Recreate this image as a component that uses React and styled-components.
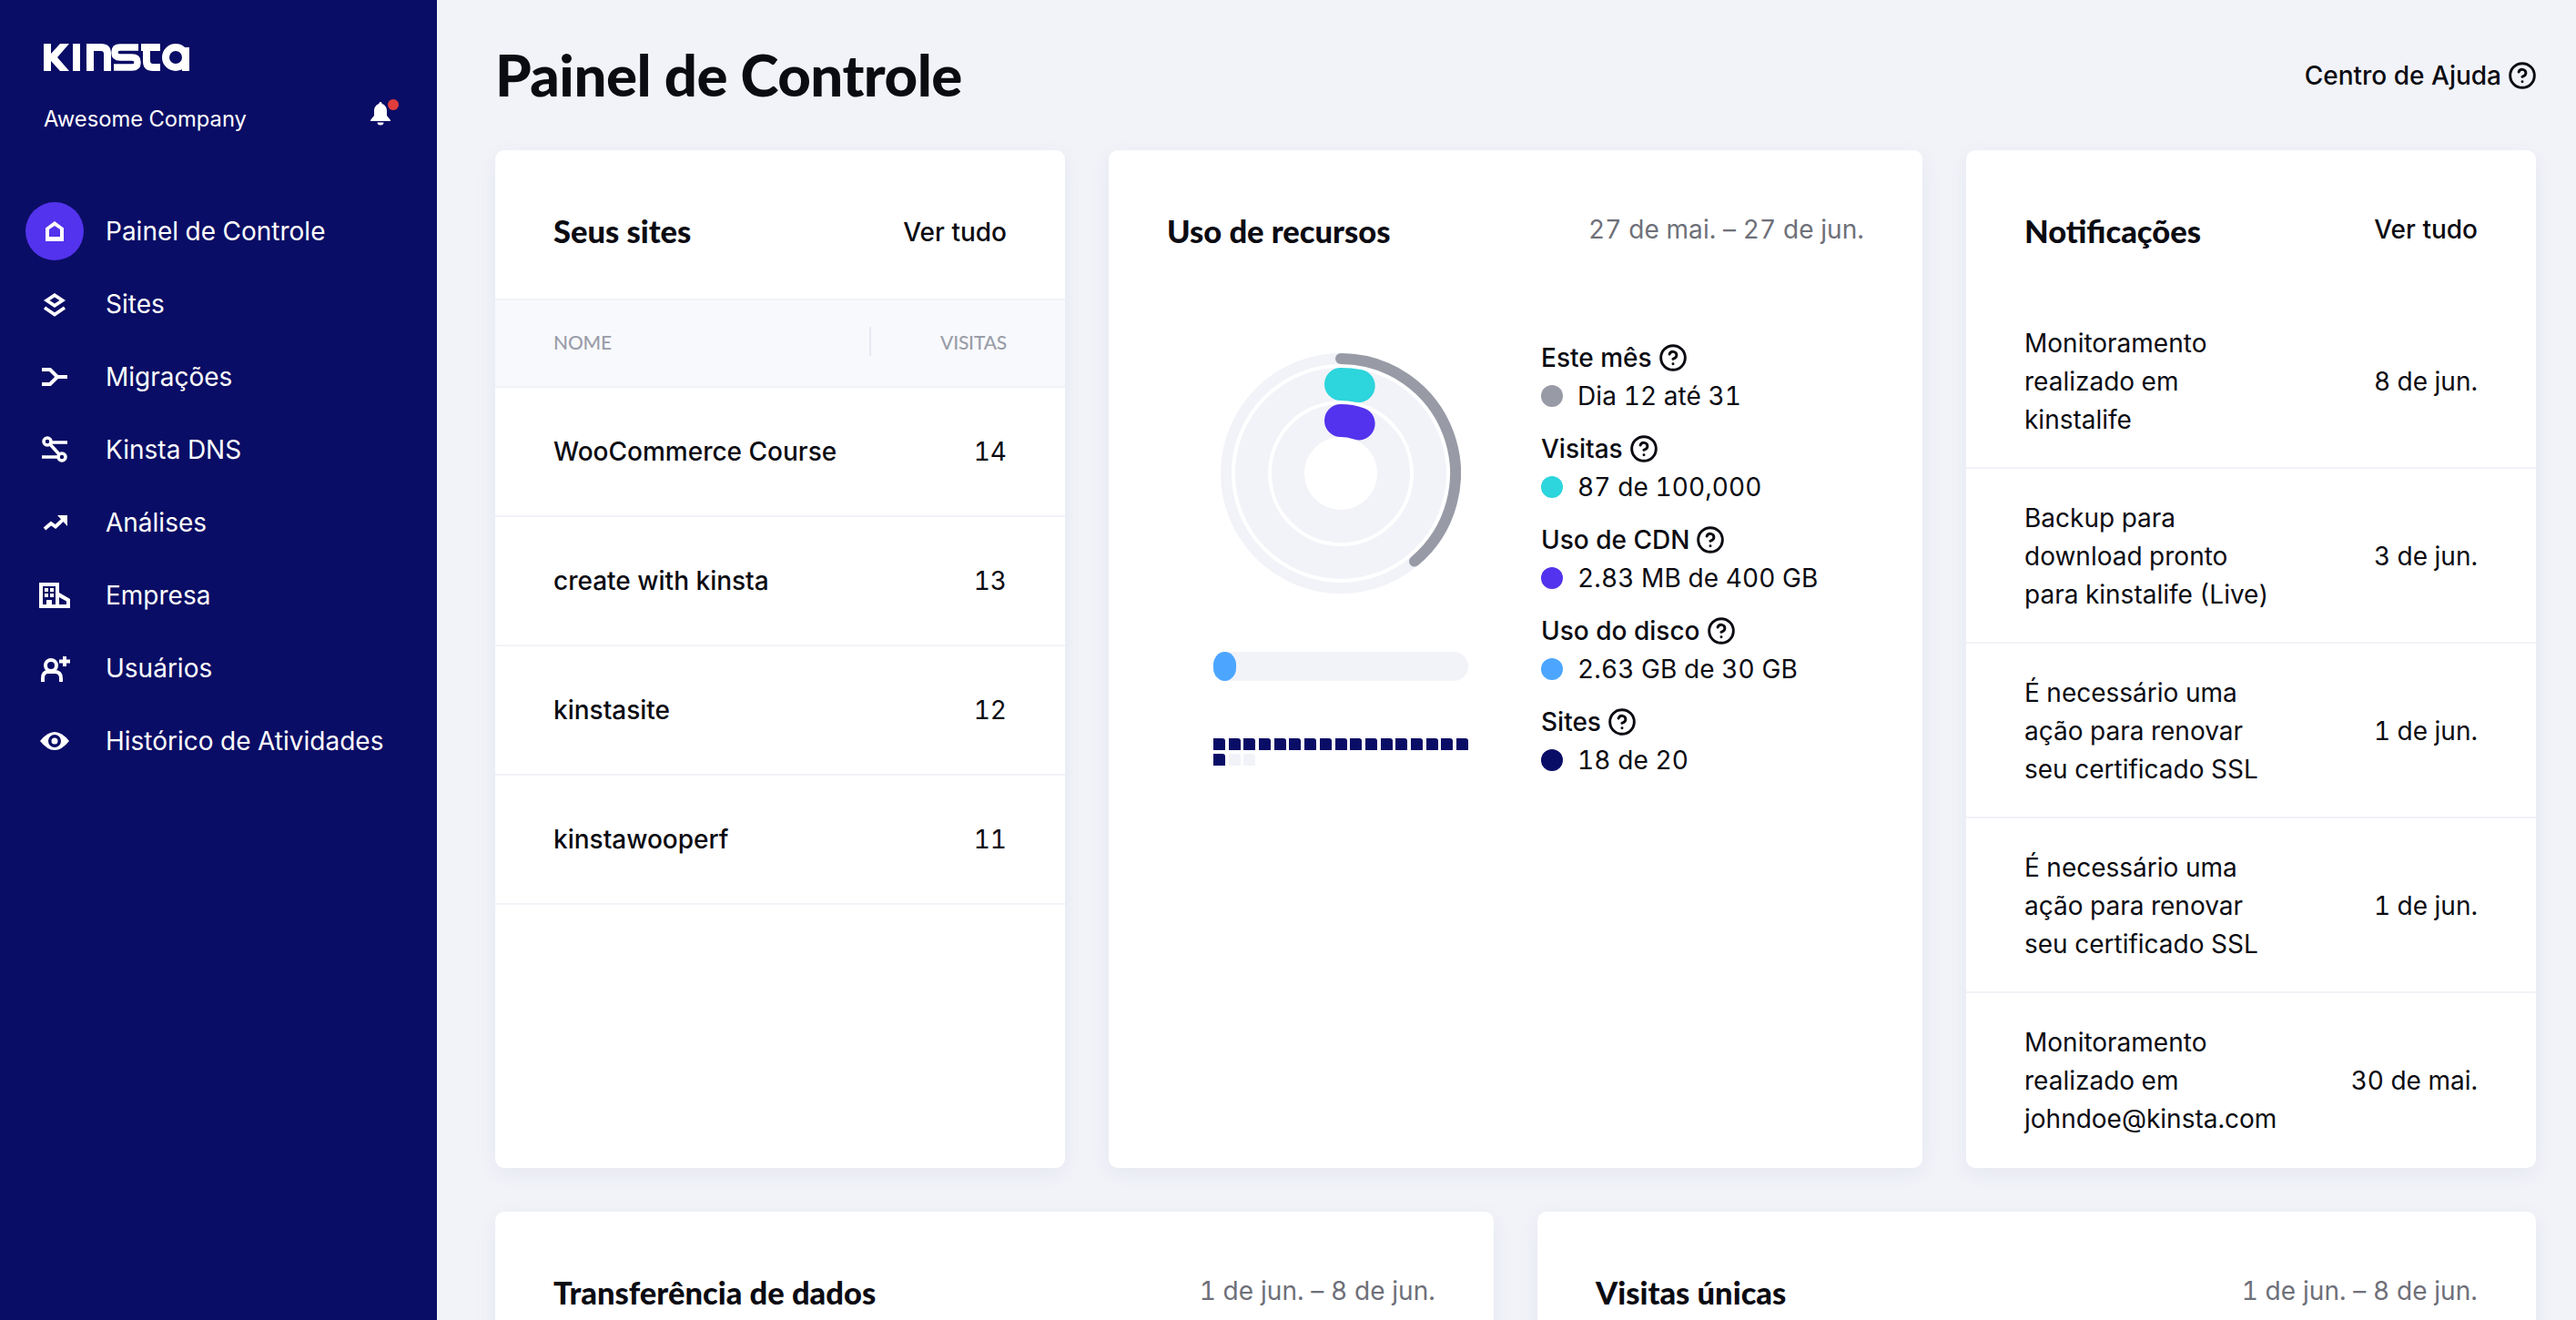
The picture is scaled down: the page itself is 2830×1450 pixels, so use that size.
import styled, { createGlobalStyle } from "styled-components";
import { CircleHelp } from "lucide-react";

const GlobalStyle = createGlobalStyle`
  * {
    box-sizing: border-box;
  }
  html,
  body {
    margin: 0;
    height: 100%;
    overflow: hidden;
    font-family: "Inter", "Liberation Sans", sans-serif;
    font-variant-numeric: tabular-nums;
    color: #0b0b12;
    -webkit-font-smoothing: antialiased;
  }
`;

const Layout = styled.div`
  display: flex;
  height: 100vh;
  background-color: #f2f3f8;
`;

const Sidebar = styled.aside`
  flex: 0 0 480px;
  display: flex;
  flex-direction: column;
  background-color: #0a0d65;
  color: #fff;
  padding-top: 48px;
`;

const Logo = styled.svg`
  display: block;
  margin-left: 48px;
`;

const CompanyRow = styled.div`
  display: flex;
  align-items: center;
  justify-content: space-between;
  margin: 34px 46px 0 48px;
  height: 36px;
  font-size: 23.75px;
`;

const BellWrap = styled.div`
  position: relative;
  display: flex;
  margin: 0 4px 10px 0;
`;

const BellDot = styled.span`
  position: absolute;
  top: -3px;
  right: -8px;
  width: 12px;
  height: 12px;
  border-radius: 50%;
  background-color: #e03c3c;
`;

const NavList = styled.nav`
  display: flex;
  flex-direction: column;
  margin-top: 66px;
`;

const NavItem = styled.a`
  display: flex;
  align-items: center;
  height: 80px;
  font-size: 28px;
`;

const NavIcon = styled.span`
  flex: 0 0 64px;
  height: 64px;
  margin: 0 24px 0 28px;
  display: flex;
  align-items: center;
  justify-content: center;
  border-radius: 50%;
  background-color: ${(props) => (props.$active ? "#5333ed" : "transparent")};
`;

const Main = styled.main`
  flex: 1;
  min-width: 0;
  height: 100vh;
  overflow: hidden;
  padding: 0 44px 0 64px;
`;

const TopBar = styled.header`
  display: flex;
  align-items: center;
  justify-content: space-between;
  height: 165px;
`;

const PageTitle = styled.h1`
  margin: -2px 0 0;
  font-family: "Lato", sans-serif;
  font-size: 63.5px;
  font-weight: 900;
  letter-spacing: -0.5px;
`;

const HelpLink = styled.a`
  display: flex;
  align-items: center;
  gap: 8px;
  font-size: 28px;
  font-weight: 500;
`;

const HelpIcon = styled(CircleHelp)`
  flex: none;
  margin: -1px;
`;

const TopRow = styled.section`
  display: grid;
  grid-template-columns: 626px 894px 626px;
  grid-template-rows: 1118px;
  gap: 48px;
`;

const BottomRow = styled.section`
  display: grid;
  grid-template-columns: 1097px 1097px;
  grid-template-rows: 626px;
  gap: 48px;
  margin-top: 48px;
`;

const Card = styled.article`
  display: flex;
  flex-direction: column;
  background-color: #fff;
  border-radius: 10px;
  box-shadow: 0 6px 20px rgba(170, 176, 216, 0.16);
  overflow: hidden;
`;

const CardHeader = styled.div`
  flex: 0 0 ${(props) => props.$height || 163}px;
  display: flex;
  align-items: flex-start;
  justify-content: space-between;
  padding: 71px 64px 0;
`;

const CardTitle = styled.h2`
  margin: 0;
  font-family: "Lato", sans-serif;
  font-size: 34.5px;
  line-height: 36px;
  font-weight: 900;
`;

const ViewAll = styled.a`
  margin-top: ${(props) => props.$drop || 0}px;
  font-size: 28px;
  line-height: 32px;
  font-weight: 500;
`;

const DateRange = styled.span`
  font-size: 28px;
  line-height: 32px;
  letter-spacing: 0.1px;
  color: #6e7079;
`;

const TableHead = styled.div`
  display: flex;
  align-items: center;
  justify-content: space-between;
  height: 98px;
  padding: 0 64px 4px;
  background-color: #f8f9fc;
  border-top: 2px solid #f2f3f8;
  border-bottom: 2px solid #f2f3f8;
  font-family: "Lato", sans-serif;
  font-size: 21px;
  font-weight: 500;
  letter-spacing: -0.2px;
  color: #9a9da9;
`;

const HeadRight = styled.span`
  display: flex;
  align-items: center;
  gap: 76px;
  &::before {
    content: "";
    width: 2px;
    height: 32px;
    background-color: #e8e9f1;
  }
`;

const SiteRow = styled.div`
  display: flex;
  align-items: center;
  justify-content: space-between;
  height: 142px;
  padding: 0 64px;
  border-bottom: 2px solid #f2f3f8;
  font-size: 28px;
  font-weight: 500;
`;

const SiteCount = styled.span`
  font-weight: 400;
`;

const UsageBody = styled.div`
  display: flex;
  gap: 80px;
  padding: 47px 0 0 115px;
`;

const ChartColumn = styled.div`
  width: 280px;
  margin-top: 13px;
  display: flex;
  flex-direction: column;
`;

const Donut = styled.svg`
  display: block;
  margin: 0 auto;
`;

const BarTrack = styled.div`
  height: 32px;
  margin-top: 64px;
  border-radius: 16px;
  background-color: #f2f3f8;
`;

const BarFill = styled.div`
  height: 100%;
  border-radius: 14px / 16px;
  background-color: #4ca6ff;
`;

const SquareGrid = styled.div`
  display: grid;
  grid-template-columns: repeat(17, 13px);
  justify-content: space-between;
  row-gap: 4px;
  margin-top: 63px;
`;

const Square = styled.span`
  height: 13px;
  border-top-right-radius: 3px;
  background-color: ${(props) => (props.$filled ? "#0a0d65" : "#f2f3f8")};
`;

const Legend = styled.div`
  display: flex;
  flex-direction: column;
  gap: 22px;
`;

const LegendTitle = styled.div`
  display: flex;
  align-items: center;
  gap: 8px;
  height: 36px;
  font-size: 28px;
  font-weight: 500;
`;

const LegendValue = styled.div`
  display: flex;
  align-items: center;
  gap: 16px;
  height: 36px;
  margin-top: 6px;
  font-size: 28px;
  letter-spacing: 0.1px;
`;

const Dot = styled.span`
  flex: 0 0 24px;
  height: 24px;
  border-radius: 50%;
  background-color: ${(props) => props.$color};
`;

const NoticeRow = styled.div`
  flex: 0 0 192px;
  display: flex;
  align-items: center;
  justify-content: space-between;
  padding: 2px 64px 0;
  border-bottom: 2px solid #f2f3f8;
  font-size: 28px;
  line-height: 42px;
  &:last-child {
    padding-top: 0;
    border-bottom: none;
  }
`;

const NoticeText = styled.div`
  width: 280px;
`;

const KinstaLogo = () => (
  <Logo width="160" height="30" viewBox="0 0 160 30" fill="#fff">
    <path d="M0 0h8v30H0zM8 11 18 0h10L15 15l13 15H18L8 19z" />
    <rect x="32" y="0" width="8" height="30" />
    <path d="M51 30V4h12q7 0 7 7v19" fill="none" stroke="#fff" strokeWidth="8" />
    <path d="M104 4H84q-6 0-6 5.5T84 15h13q6 0 6 5.5T97 26H77" fill="none" stroke="#fff" strokeWidth="7.5" />
    <path d="M113 0v19q0 7 7 7h8M107 4h21" fill="none" stroke="#fff" strokeWidth="8" />
    <circle cx="145" cy="15" r="11" fill="none" stroke="#fff" strokeWidth="8" />
    <rect x="152" y="4" width="8" height="26" />
  </Logo>
);

const BellIcon = () => (
  <svg width="24" height="26" viewBox="0 0 24 26" fill="#fff">
    <path d="M12 0c1 0 1.6.9 1.6 2C17 3 19 6 19 10v5l4 5v1H1v-1l4-5v-5c0-4 2-7 5.400-8C10.400.9 11 0 12 0z" />
    <path d="M8.500 22.500h7a3.500 3 0 0 1-7 0z" />
  </svg>
);

const icons = {
  home: (
    <svg width="24" height="24" viewBox="0 0 24 24" fill="#fff">
      <path fillRule="evenodd" d="M2 23V8.500L12 1l10 7.500V23zM6 18h12v-8l-6-4-6 4z" />
    </svg>
  ),
  sites: (
    <svg width="28" height="28" viewBox="0 0 28 28" fill="none" stroke="#fff">
      <path fill="#fff" stroke="none" fillRule="evenodd" d="M14 2l12 8-12 8-12-8zM14 6.500L8.500 10l5.500 3.500 5.500-3.500z" />
      <path d="M3 18l11 7.500L25 18" strokeWidth="3.600" />
    </svg>
  ),
  migrations: (
    <svg width="32" height="24" viewBox="0 0 32 24" fill="none" stroke="#fff" strokeWidth="4">
      <path d="M2 4h9l8 8h11M2 20h9l8-8" />
    </svg>
  ),
  dns: (
    <svg width="32" height="32" viewBox="0 0 32 32" fill="none" stroke="#fff" strokeWidth="3.600">
      <circle cx="8" cy="7" r="4" />
      <circle cx="24" cy="24" r="4" />
      <path d="M12 8h18M2 24h18M11 10l10 11" />
    </svg>
  ),
  analytics: (
    <svg width="32" height="24" viewBox="0 0 32 24" fill="#fff">
      <path d="M5 19l7-6 5 3.500L25 9" fill="none" stroke="#fff" strokeWidth="3.800" />
      <path d="M19 4h11v12z" />
    </svg>
  ),
  company: (
    <svg width="34" height="28" viewBox="0 0 34 28" fill="#fff">
      <path
        fillRule="evenodd"
        d="M0 0h22v11l12 7v10H0zM4 4v20h4v-5h6v5h4V4zM22 16v8h8v-3.500z"
      />
      <path d="M6 6h4v4H6zM12 6h4v4h-4zM6 12h4v4H6zM12 12h4v4h-4z" />
    </svg>
  ),
  users: (
    <svg width="34" height="32" viewBox="0 0 34 32" fill="none" stroke="#fff" strokeWidth="4">
      <circle cx="13" cy="13" r="6" />
      <path d="M4 31v-4q0-7 6-7h7q7 0 7 7v4M28 3v11M22 8.500h12" />
    </svg>
  ),
  activity: (
    <svg width="32" height="20" viewBox="0 0 32 20" fill="#fff">
      <path fillRule="evenodd" d="M0 10Q8 0 16 0t16 10Q24 20 16 20T0 10zM16 3a7 7 0 1 0 0 14 7 7 0 0 0 0-14z" />
      <circle cx="16" cy="10" r="3.500" />
    </svg>
  ),
};

const navItems = [
  { label: "Painel de Controle", icon: "home", active: true },
  { label: "Sites", icon: "sites" },
  { label: "Migrações", icon: "migrations" },
  { label: "Kinsta DNS", icon: "dns" },
  { label: "Análises", icon: "analytics" },
  { label: "Empresa", icon: "company" },
  { label: "Usuários", icon: "users" },
  { label: "Histórico de Atividades", icon: "activity" },
];

const sites = [
  { name: "WooCommerce Course", visits: 14 },
  { name: "create with kinsta", visits: 13 },
  { name: "kinstasite", visits: 12 },
  { name: "kinstawooperf", visits: 11 },
];

const legend = [
  { title: "Este mês", value: "Dia 12 até 31", color: "#989ba6" },
  { title: "Visitas", value: "87 de 100,000", color: "#2dd5dc" },
  { title: "Uso de CDN", value: "2.83 MB de 400 GB", color: "#5333ed" },
  { title: "Uso do disco", value: "2.63 GB de 30 GB", color: "#4ca6ff" },
  { title: "Sites", value: "18 de 20", color: "#0a0d65" },
];

const notices = [
  { text: "Monitoramento realizado em kinstalife", date: "8 de jun." },
  { text: "Backup para download pronto para kinstalife (Live)", date: "3 de jun." },
  { text: "É necessário uma ação para renovar seu certificado SSL", date: "1 de jun." },
  { text: "É necessário uma ação para renovar seu certificado SSL", date: "1 de jun." },
  { text: "Monitoramento realizado em johndoe@kinsta.com", date: "30 de mai." },
];

const polar = (r, deg) => {
  const a = (deg * Math.PI) / 180;
  return `${132 + r * Math.sin(a)} ${132 - r * Math.cos(a)}`;
};

const arc = (r, deg) =>
  `M${polar(r, 0)} A${r} ${r} 0 0 1 ${polar(r, deg)}`;

const UsageDonut = () => (
  <Donut width="264" height="264" viewBox="0 0 264 264" fill="none">
    <circle cx="132" cy="132" r="126" stroke="#f2f3f8" strokeWidth="12" />
    <circle cx="132" cy="132" r="98" stroke="#f2f3f8" strokeWidth="36" />
    <circle cx="132" cy="132" r="58" stroke="#f2f3f8" strokeWidth="36" />
    <path d={arc(126, 140)} stroke="#989ba6" strokeWidth="12" strokeLinecap="round" />
    <path d={arc(98, 11.6)} stroke="#2dd5dc" strokeWidth="36" strokeLinecap="round" />
    <path d={arc(58, 19.8)} stroke="#5333ed" strokeWidth="36" strokeLinecap="round" />
  </Donut>
);

const App = () => {
  return (
    <Layout>
      <GlobalStyle />
      <Sidebar>
        <KinstaLogo />
        <CompanyRow>
          Awesome Company
          <BellWrap>
            <BellIcon />
            <BellDot />
          </BellWrap>
        </CompanyRow>
        <NavList>
          {navItems.map((item) => (
            <NavItem key={item.label}>
              <NavIcon $active={item.active}>{icons[item.icon]}</NavIcon>
              {item.label}
            </NavItem>
          ))}
        </NavList>
      </Sidebar>
      <Main>
        <TopBar>
          <PageTitle>Painel de Controle</PageTitle>
          <HelpLink>
            Centro de Ajuda
            <HelpIcon size={32} strokeWidth={2.2} />
          </HelpLink>
        </TopBar>
        <TopRow>
          <Card>
            <CardHeader>
              <CardTitle>Seus sites</CardTitle>
              <ViewAll $drop={3}>Ver tudo</ViewAll>
            </CardHeader>
            <TableHead>
              <span>NOME</span>
              <HeadRight>VISITAS</HeadRight>
            </TableHead>
            {sites.map((site) => (
              <SiteRow key={site.name}>
                {site.name}
                <SiteCount>{site.visits}</SiteCount>
              </SiteRow>
            ))}
          </Card>
          <Card>
            <CardHeader>
              <CardTitle>Uso de recursos</CardTitle>
              <DateRange>27 de mai. – 27 de jun.</DateRange>
            </CardHeader>
            <UsageBody>
              <ChartColumn>
                <UsageDonut />
                <BarTrack>
                  <BarFill style={{ width: "9%" }} />
                </BarTrack>
                <SquareGrid>
                  {Array.from({ length: 20 }, (_, i) => (
                    <Square key={i} $filled={i < 18} />
                  ))}
                </SquareGrid>
              </ChartColumn>
              <Legend>
                {legend.map((row) => (
                  <div key={row.title}>
                    <LegendTitle>
                      {row.title}
                      <HelpIcon size={32} strokeWidth={2.2} />
                    </LegendTitle>
                    <LegendValue>
                      <Dot $color={row.color} />
                      {row.value}
                    </LegendValue>
                  </div>
                ))}
              </Legend>
            </UsageBody>
          </Card>
          <Card>
            <CardHeader $height={158}>
              <CardTitle>Notificações</CardTitle>
              <ViewAll>Ver tudo</ViewAll>
            </CardHeader>
            {notices.map((notice, i) => (
              <NoticeRow key={i}>
                <NoticeText>{notice.text}</NoticeText>
                <span>{notice.date}</span>
              </NoticeRow>
            ))}
          </Card>
        </TopRow>
        <BottomRow>
          <Card>
            <CardHeader>
              <CardTitle>Transferência de dados</CardTitle>
              <DateRange>1 de jun. – 8 de jun.</DateRange>
            </CardHeader>
          </Card>
          <Card>
            <CardHeader>
              <CardTitle>Visitas únicas</CardTitle>
              <DateRange>1 de jun. – 8 de jun.</DateRange>
            </CardHeader>
          </Card>
        </BottomRow>
      </Main>
    </Layout>
  );
};

export default App;
